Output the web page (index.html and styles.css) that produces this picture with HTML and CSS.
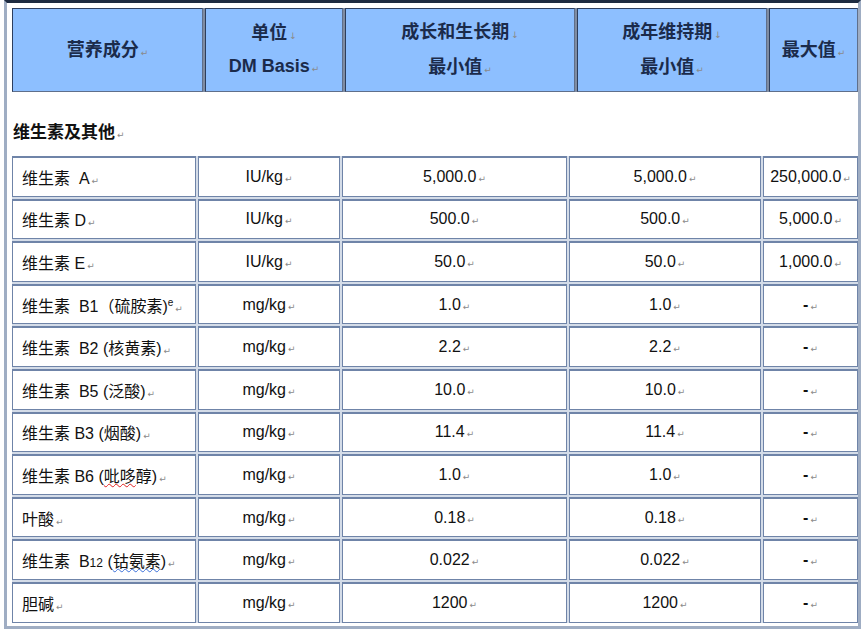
FILE: index.html
```html
<!DOCTYPE html>
<html lang="zh">
<head>
<meta charset="utf-8">
<title>营养成分</title>
<link rel="stylesheet" href="styles.css">
</head>
<body>
<div class="frame">
  <div class="head">
    <div class="hc"><span>营养成分<span class="pm">↵</span></span></div>
    <div class="hc"><span>单位<span class="pm">↓</span></span><span class="latin">DM Basis<span class="pm">↵</span></span></div>
    <div class="hc"><span>成长和生长期<span class="pm">↓</span></span><span>最小值<span class="pm">↵</span></span></div>
    <div class="hc"><span>成年维持期<span class="pm">↓</span></span><span>最小值<span class="pm">↵</span></span></div>
    <div class="hc"><span>最大值<span class="pm">↵</span></span></div>
  </div>
  <div class="section">维生素及其他<span class="pm">↵</span></div>
  <div class="body">
    <div class="c name"><span>维生素&nbsp;&nbsp;A<span class="pm">↵</span></span></div><div class="c"><span>IU/kg<span class="pm">↵</span></span></div><div class="c"><span>5,000.0<span class="pm">↵</span></span></div><div class="c"><span>5,000.0<span class="pm">↵</span></span></div><div class="c"><span>250,000.0<span class="pm">↵</span></span></div>
    <div class="c name"><span>维生素 D<span class="pm">↵</span></span></div><div class="c"><span>IU/kg<span class="pm">↵</span></span></div><div class="c"><span>500.0<span class="pm">↵</span></span></div><div class="c"><span>500.0<span class="pm">↵</span></span></div><div class="c"><span>5,000.0<span class="pm">↵</span></span></div>
    <div class="c name"><span>维生素 E<span class="pm">↵</span></span></div><div class="c"><span>IU/kg<span class="pm">↵</span></span></div><div class="c"><span>50.0<span class="pm">↵</span></span></div><div class="c"><span>50.0<span class="pm">↵</span></span></div><div class="c"><span>1,000.0<span class="pm">↵</span></span></div>
    <div class="c name"><span>维生素&nbsp;&nbsp;B1（硫胺素)<sup class="sup">e</sup><span class="pm">↵</span></span></div><div class="c"><span>mg/kg<span class="pm">↵</span></span></div><div class="c"><span>1.0<span class="pm">↵</span></span></div><div class="c"><span>1.0<span class="pm">↵</span></span></div><div class="c"><span class="dash">-<span class="pm">↵</span></span></div>
    <div class="c name"><span>维生素&nbsp;&nbsp;B2 (核黄素)<span class="pm">↵</span></span></div><div class="c"><span>mg/kg<span class="pm">↵</span></span></div><div class="c"><span>2.2<span class="pm">↵</span></span></div><div class="c"><span>2.2<span class="pm">↵</span></span></div><div class="c"><span class="dash">-<span class="pm">↵</span></span></div>
    <div class="c name"><span>维生素&nbsp;&nbsp;B5 (泛酸)<span class="pm">↵</span></span></div><div class="c"><span>mg/kg<span class="pm">↵</span></span></div><div class="c"><span>10.0<span class="pm">↵</span></span></div><div class="c"><span>10.0<span class="pm">↵</span></span></div><div class="c"><span class="dash">-<span class="pm">↵</span></span></div>
    <div class="c name"><span>维生素 B3 (烟酸)<span class="pm">↵</span></span></div><div class="c"><span>mg/kg<span class="pm">↵</span></span></div><div class="c"><span>11.4<span class="pm">↵</span></span></div><div class="c"><span>11.4<span class="pm">↵</span></span></div><div class="c"><span class="dash">-<span class="pm">↵</span></span></div>
    <div class="c name"><span>维生素 B6 (<span class="err">吡哆</span>醇)<span class="pm">↵</span></span></div><div class="c"><span>mg/kg<span class="pm">↵</span></span></div><div class="c"><span>1.0<span class="pm">↵</span></span></div><div class="c"><span>1.0<span class="pm">↵</span></span></div><div class="c"><span class="dash">-<span class="pm">↵</span></span></div>
    <div class="c name"><span>叶酸<span class="pm">↵</span></span></div><div class="c"><span>mg/kg<span class="pm">↵</span></span></div><div class="c"><span>0.18<span class="pm">↵</span></span></div><div class="c"><span>0.18<span class="pm">↵</span></span></div><div class="c"><span class="dash">-<span class="pm">↵</span></span></div>
    <div class="c name"><span>维生素&nbsp;&nbsp;B<span class="small">12</span> (<span class="gram">钴氨素</span>)<span class="pm">↵</span></span></div><div class="c"><span>mg/kg<span class="pm">↵</span></span></div><div class="c"><span>0.022<span class="pm">↵</span></span></div><div class="c"><span>0.022<span class="pm">↵</span></span></div><div class="c"><span class="dash">-<span class="pm">↵</span></span></div>
    <div class="c name"><span>胆碱<span class="pm">↵</span></span></div><div class="c"><span>mg/kg<span class="pm">↵</span></span></div><div class="c"><span>1200<span class="pm">↵</span></span></div><div class="c"><span>1200<span class="pm">↵</span></span></div><div class="c"><span class="dash">-<span class="pm">↵</span></span></div>
  </div>
</div>
</body>
</html>
```
FILE: styles.css
```css
html, body {
  margin: 0;
  padding: 0;
  background: #ffffff;
}

.frame {
  box-sizing: border-box;
  margin-left: 4px;
  width: 857px;
  height: 629px;
  border-left: 3px solid #9fadc3;
  border-right: 3px solid #9fadc3;
  border-top: 3px solid #1d2b40;
  border-bottom: 3px solid #9fadc3;
  padding: 5px 0 0 5px;
  font-family: "Liberation Sans", "Noto Sans CJK SC", sans-serif;
}

.head {
  display: grid;
  grid-template-columns: 191px 138px 230px 190px 89px;
  column-gap: 2px;
  height: 84px;
  background: #7f8ca2;
}

.hc {
  box-sizing: border-box;
  background: #8dbfff;
  border: 1px solid;
  border-color: #2c3e5e #5f6f8b #5f6f8b #2c3e5e;
  display: flex;
  flex-direction: column;
  align-items: center;
  justify-content: center;
  row-gap: 4px;
  color: #1b2b4b;
  font-weight: bold;
  font-size: 18px;
  line-height: 26px;
  text-align: center;
  font-family: "Noto Sans CJK SC", sans-serif;
}

.hc .latin {
  font-family: "Liberation Sans", sans-serif;
  font-size: 18px;
}

.pm {
  color: #8a8a8a;
  font-size: 9px;
  font-weight: normal;
  margin-left: 2px;
  font-family: "DejaVu Sans", sans-serif;
}

.section {
  box-sizing: border-box;
  height: 64px;
  padding: 27px 0 0 1px;
  font-size: 17px;
  font-weight: bold;
  color: #111111;
  font-family: "Noto Sans CJK SC", sans-serif;
  line-height: 24px;
}

.body {
  display: grid;
  grid-template-columns: 184px 142px 225px 192px 95px;
  grid-auto-rows: 40.6px;
  gap: 2px;
  background: #d4dce8;
}

.c {
  box-sizing: border-box;
  background: #ffffff;
  border: 1px solid #6f84a8;
  border-top-width: 2px;
  display: flex;
  align-items: center;
  justify-content: center;
  font-size: 16px;
  color: #111111;
  white-space: nowrap;
}

.c.name {
  justify-content: flex-start;
  padding-left: 9px;
  font-size: 16px;
}

.dash {
  font-weight: bold;
}

.sup {
  font-size: 10px;
  vertical-align: 6px;
  line-height: 0;
}

.small {
  font-size: 12px;
}

.err {
  text-decoration: underline wavy #e02020;
  text-decoration-thickness: 1px;
}

.gram {
  text-decoration: underline wavy #3a6fd8;
  text-decoration-thickness: 1px;
}
```
